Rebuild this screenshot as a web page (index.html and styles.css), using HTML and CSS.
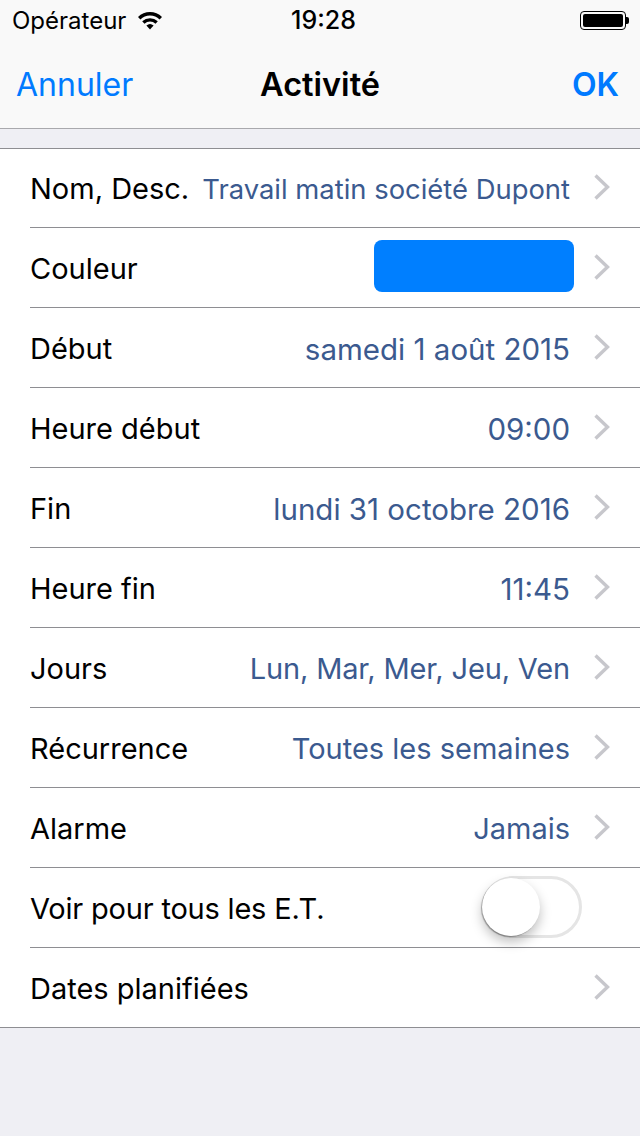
FILE: index.html
```html
<!DOCTYPE html>
<html lang="fr">

<head>
    <meta charset="UTF-8">
    <title>Activité</title>
    <link rel="stylesheet" href="styles.css">
</head>

<body>
    <svg class="defs" width="0" height="0">
        <symbol id="chevron" viewBox="0 0 16 26">
            <path d="M1.5 1.5 L13.5 13 L1.5 24.5" fill="none" stroke="#c7c7cc" stroke-width="3.4"/>
        </symbol>
    </svg>

    <header class="bar">
        <div class="status">
            <div class="status-left">
                <span>Opérateur</span>
                <svg class="wifi" width="26" height="20" viewBox="0 0 26 20">
                    <path d="M1 7 A17 17 0 0 1 25 7 L22.6 9.5 A13.6 13.6 0 0 0 3.4 9.5 Z" fill="#000"/>
                    <path d="M5.2 11.3 A11.6 11.6 0 0 1 20.8 11.3 L18.5 13.7 A8.3 8.3 0 0 0 7.5 13.7 Z" fill="#000"/>
                    <path d="M9.4 15.6 A5.4 5.4 0 0 1 16.6 15.6 L13 19.4 Z" fill="#000"/>
                </svg>
            </div>
            <div class="status-time">19:28</div>
            <div class="status-right">
                <div class="battery"><div class="battery-fill"></div></div>
                <div class="battery-tip"></div>
            </div>
        </div>
        <nav class="nav">
            <a class="nav-btn">Annuler</a>
            <div class="nav-title">Activité</div>
            <a class="nav-btn nav-ok">OK</a>
        </nav>
    </header>

    <div class="gap"></div>

    <ul class="list">
        <li class="row"><span class="label">Nom, Desc.</span><span class="value value-fit">Travail matin société Dupont</span><svg class="chev"><use href="#chevron"/></svg></li>
        <li class="row"><span class="label">Couleur</span><span class="swatch"></span><svg class="chev"><use href="#chevron"/></svg></li>
        <li class="row"><span class="label">Début</span><span class="value value-num">samedi 1 août 2015</span><svg class="chev"><use href="#chevron"/></svg></li>
        <li class="row"><span class="label">Heure début</span><span class="value value-num">09:00</span><svg class="chev"><use href="#chevron"/></svg></li>
        <li class="row"><span class="label">Fin</span><span class="value value-num">lundi 31 octobre 2016</span><svg class="chev"><use href="#chevron"/></svg></li>
        <li class="row"><span class="label">Heure fin</span><span class="value value-num">11:45</span><svg class="chev"><use href="#chevron"/></svg></li>
        <li class="row"><span class="label">Jours</span><span class="value value-tight">Lun, Mar, Mer, Jeu, Ven</span><svg class="chev"><use href="#chevron"/></svg></li>
        <li class="row"><span class="label">Récurrence</span><span class="value">Toutes les semaines</span><svg class="chev"><use href="#chevron"/></svg></li>
        <li class="row"><span class="label">Alarme</span><span class="value">Jamais</span><svg class="chev"><use href="#chevron"/></svg></li>
        <li class="row"><span class="label label-tight">Voir pour tous les E.T.</span><span class="switch"><span class="knob"></span></span></li>
        <li class="row"><span class="label">Dates planifiées</span><svg class="chev"><use href="#chevron"/></svg></li>
    </ul>
</body>

</html>
```

FILE: styles.css
```css
* {
    box-sizing: border-box;
}

html, body {
    height: 100%;
}

body {
    margin: 0;
    background: #efeff4;
    color: #000;
    font-family: Inter, "Liberation Sans", sans-serif;
    overflow: hidden;
}

.defs {
    display: block;
    height: 0;
}

.bar {
    height: 129px;
    background: #f9f9f9;
    border-bottom: 1px solid #a9a9ad;
}

.status {
    display: flex;
    align-items: center;
    justify-content: space-between;
    height: 40px;
    padding: 0 11px 0 12px;
    font-size: 24px;
}

.status-left {
    display: flex;
    align-items: center;
    gap: 11px;
    width: 226px;
}

.status-time {
    font-size: 25px;
    font-weight: 500;
}

.status-right {
    display: flex;
    align-items: center;
    justify-content: flex-end;
    width: 220px;
}

.battery {
    width: 46px;
    height: 19px;
    padding: 2px;
    border: 1px solid #000;
    border-radius: 4px;
}

.battery-fill {
    height: 100%;
    background: #000;
    border-radius: 2px;
}

.battery-tip {
    width: 3px;
    height: 7px;
    background: #000;
    border-radius: 0 2px 2px 0;
}

.nav {
    display: flex;
    align-items: center;
    justify-content: space-between;
    height: 88px;
    padding: 0 21px 0 16px;
    font-size: 32px;
}

.nav-btn {
    width: 170px;
    color: #007aff;
}

.nav-ok {
    width: 165px;
    text-align: right;
    font-weight: 600;
}

.nav-title {
    font-weight: 600;
    font-size: 32.5px;
}

.gap {
    height: 19px;
}

.list {
    margin: 0;
    padding: 0;
    list-style: none;
    background: #fff;
    border-top: 1px solid #8e8e92;
    border-bottom: 1px solid #8e8e92;
}

.row {
    display: flex;
    align-items: center;
    height: 80px;
    margin-left: 30px;
    padding-right: 30px;
    font-size: 29px;
    border-bottom: 1px solid #8e8e92;
}

.row:first-child {
    height: 79px;
}

.row:last-child {
    height: 79px;
    border-bottom: 0;
}

.row + .row .label, .value {
    padding-top: 2px;
}

.label {
    flex: none;
    margin-right: auto;
}

.label-tight {
    letter-spacing: -0.2px;
}

.value {
    flex: none;
    margin-right: 24px;
    color: #3b5a8f;
    white-space: nowrap;
}

.value-num {
    font-size: 29.5px;
}

.value-tight {
    letter-spacing: -0.15px;
}

.value-fit {
    font-size: 27.4px;
}

.chev {
    flex: none;
    width: 16px;
    height: 26px;
    margin-bottom: 2px;
}

.swatch {
    width: 200px;
    height: 52px;
    margin: 0 20px 4px 0;
    background: #007fff;
    border-radius: 8px;
}

.switch {
    display: block;
    width: 100px;
    height: 62px;
    margin-right: 28px;
    margin-bottom: 2px;
    background: #fff;
    border: 3px solid #e5e5e5;
    border-radius: 31px;
}

.knob {
    display: block;
    width: 58px;
    height: 58px;
    margin: -1px 0 0 -3px;
    background: #fff;
    border-radius: 50%;
    box-shadow: -1px 1px 1px rgba(0, 0, 0, 0.3), 0 6px 12px rgba(0, 0, 0, 0.25);
}
```
